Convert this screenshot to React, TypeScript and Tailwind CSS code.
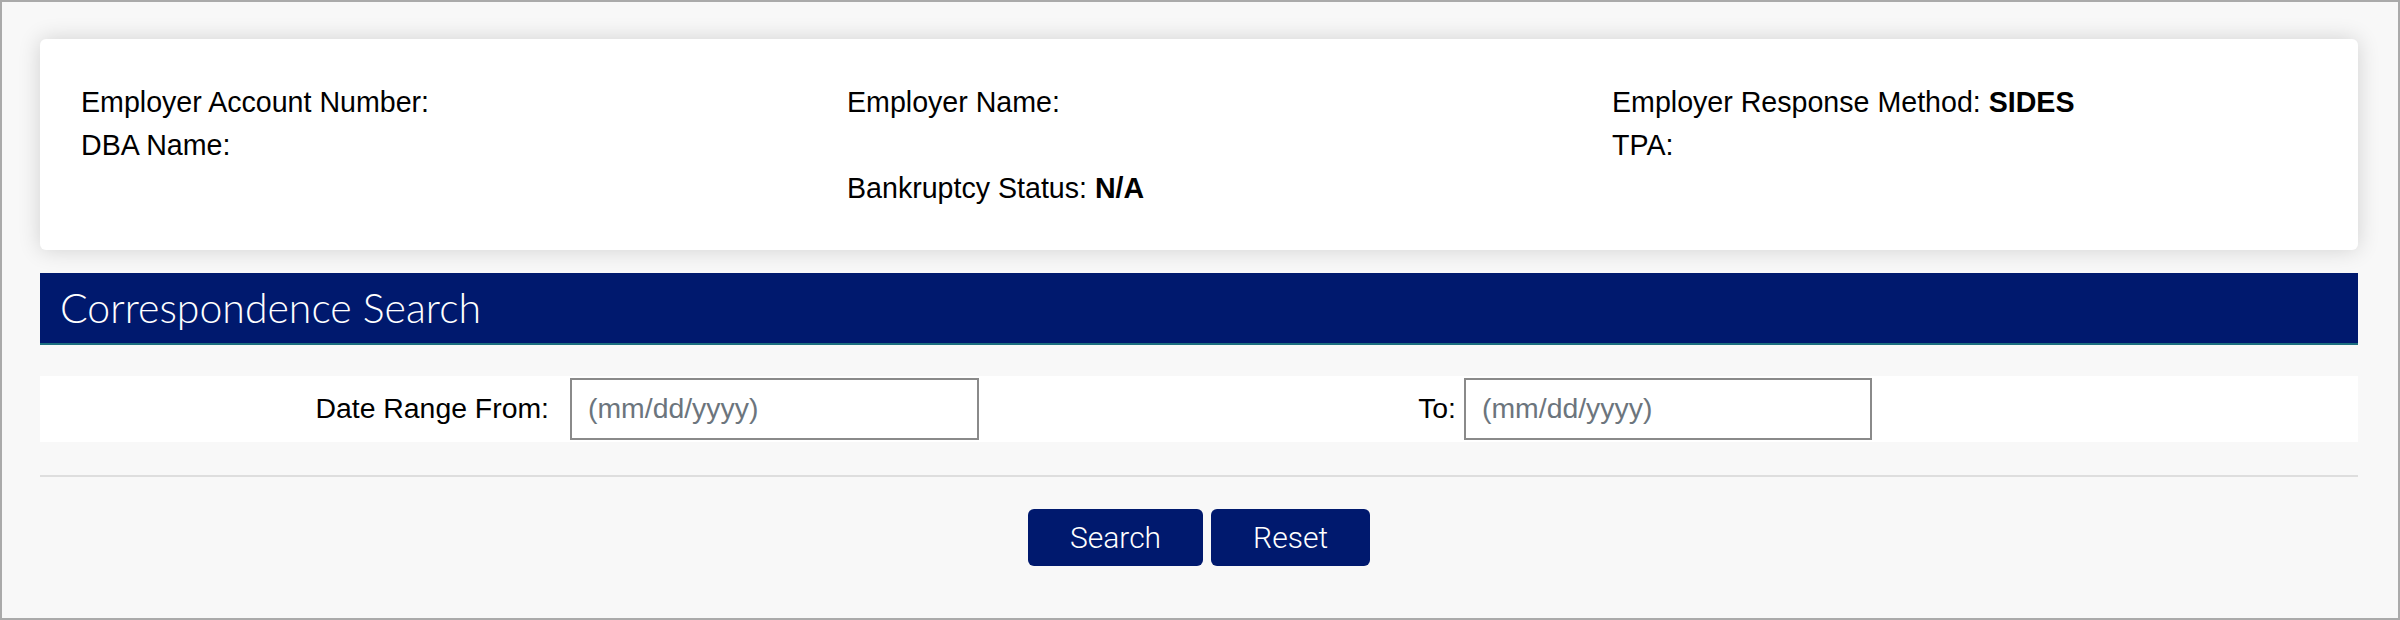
import React from "react"

const navy = "bg-[#00196e]"

function InfoCard() {
    return (
        <div className="w-[2318px] rounded-[6px] bg-white shadow-[0_0_22px_rgba(0,0,0,0.16)] pl-[41px] pt-[42px] pb-[40px] text-[28.6px] leading-[43px] text-black font-['Liberation_Sans',Arial,sans-serif]">
            <div className="grid grid-cols-[766px_765px_1fr]">
                <div className="flex flex-col">
                    <p>Employer Account Number:</p>
                    <p>DBA Name:</p>
                </div>
                <div className="flex flex-col">
                    <p>Employer Name:</p>
                    <p>&nbsp;</p>
                    <p>Bankruptcy Status: <b>N/A</b></p>
                </div>
                <div className="flex flex-col">
                    <p>Employer Response Method: <b>SIDES</b></p>
                    <p>TPA:</p>
                </div>
            </div>
        </div>
    )
}

export default function App() {
    return (
        <div className="w-[2400px] h-[620px] border-2 border-[#aaaaaa] bg-[#f8f8f8] overflow-hidden">
            <div className="flex flex-col pl-[38px] pt-[36.5px]">
                <InfoCard />
                {/* section header */}
                <div className={`mt-[23px] w-[2318px] h-[72px] ${navy} border-b-2 border-[#1c6f7f] flex items-center pl-[20px]`}>
                    <h2 className="text-white text-[41px] font-light font-['Lato',sans-serif]">Correspondence Search</h2>
                </div>
                {/* date range row */}
                <div className="mt-[31px] w-[2318px] h-[66px] bg-white flex items-center text-[28.4px] font-['Liberation_Sans',Arial,sans-serif] text-black">
                    <label className="w-[509px] text-right">Date Range From:</label>
                    <input
                        className="ml-[21px] w-[409px] h-[62px] border-2 border-[#8a8a8a] bg-white pl-[16px] outline-none placeholder:text-[#6c757d]"
                        placeholder="(mm/dd/yyyy)"
                    />
                    <label className="w-[477px] text-right">To:</label>
                    <input
                        className="ml-[8px] w-[408px] h-[62px] border-2 border-[#8a8a8a] bg-white pl-[16px] outline-none placeholder:text-[#6c757d]"
                        placeholder="(mm/dd/yyyy)"
                    />
                </div>
                <div className="mt-[33px] w-[2318px] h-[2px] bg-[#dedede]" />
                <div className="mt-[32px] w-[2318px] flex justify-center gap-[8px]">
                    <button className={`${navy} h-[57px] px-[42px] rounded-[6px] text-white text-[30px] font-light font-['Roboto',sans-serif]`}>Search</button>
                    <button className={`${navy} h-[57px] px-[42px] rounded-[6px] text-white text-[30px] font-light font-['Roboto',sans-serif]`}>Reset</button>
                </div>
            </div>
        </div>
    )
}
